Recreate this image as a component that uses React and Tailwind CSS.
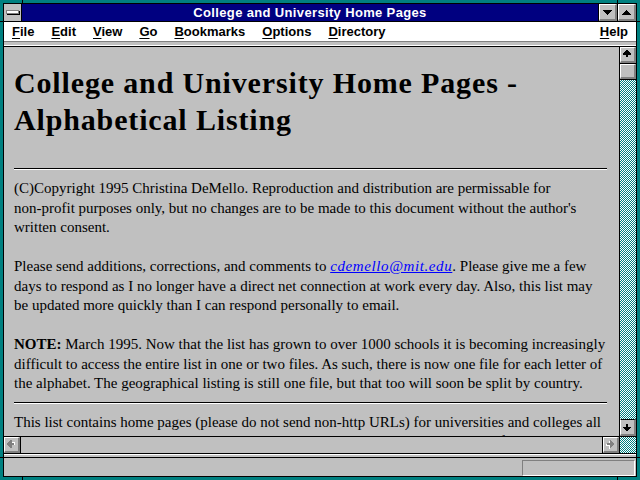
import React from "react";

const bevel =
  "bg-[#c0c0c0] border-t border-l border-white border-r-2 border-b-2 border-r-[#808080] border-b-[#808080] flex items-center justify-center";

const pattern =
  "bg-[image:repeating-conic-gradient(#008080_0%_25%,#ffffff_0%_50%)] bg-[length:2px_2px]";

function ArrowSvg({ dir, disabled }) {
  const rot = { up: 0, down: 180, left: 270, right: 90 }[dir];
  const pts = "4,0 5,0 9,4 9,5 6,5 6,8 3,8 3,5 0,5 0,4";
  return (
    <svg width="9" height="9" viewBox="0 0 10 10" shapeRendering="crispEdges">
      <g transform={`rotate(${rot} 4.5 4.5)`}>
        {disabled && <polygon points={pts} fill="#ffffff" transform="translate(1 1)" />}
        <polygon points={pts} fill={disabled ? "#808080" : "#000000"} />
      </g>
    </svg>
  );
}

function Tri({ up }) {
  return (
    <svg width="9" height="5" viewBox="0 0 9 5" shapeRendering="crispEdges">
      <polygon points={up ? "4.5,0 9,5 0,5" : "0,0 9,0 4.5,5"} fill="#000" />
    </svg>
  );
}

function SysIcon() {
  return (
    <svg width="14" height="5" viewBox="0 0 14 5" shapeRendering="crispEdges">
      <rect x="0" y="0" width="13" height="4" fill="#808080" />
      <rect x="1" y="1" width="11" height="2" fill="#ffffff" />
      <rect x="1" y="4" width="13" height="1" fill="#000" />
      <rect x="13" y="1" width="1" height="4" fill="#000" />
    </svg>
  );
}

function MenuItem({ first, rest }) {
  return (
    <span>
      <span className="underline underline-offset-[2px]">{first}</span>
      {rest}
    </span>
  );
}

export default function App() {
  return (
    <div className="relative w-[640px] h-[480px] bg-[#008080] p-[3px] overflow-hidden">
      {/* frame ticks */}
      <div className="absolute left-[22px] top-0 w-[1px] h-[3px] bg-black" />
      <div className="absolute left-[617px] top-0 w-[1px] h-[3px] bg-black" />
      <div className="absolute left-[22px] bottom-0 w-[1px] h-[3px] bg-black" />
      <div className="absolute left-[617px] bottom-0 w-[1px] h-[3px] bg-black" />
      <div className="absolute left-0 top-[21px] w-[3px] h-[1px] bg-black" />
      <div className="absolute right-0 top-[21px] w-[3px] h-[1px] bg-black" />
      <div className="absolute left-0 top-[457px] w-[3px] h-[1px] bg-black" />
      <div className="absolute right-0 top-[457px] w-[3px] h-[1px] bg-black" />

      <div className="h-full border border-black flex flex-col bg-[#c0c0c0] font-['Liberation_Sans',Arial,sans-serif]">
        {/* title bar */}
        <div className="h-[17px] flex border-b border-black box-content">
          <div className="w-[18px] border-r border-black bg-[#c0c0c0] flex items-center justify-center">
            <SysIcon />
          </div>
          <div className="flex-1 bg-[#000080] text-white font-bold text-[13px] tracking-[0.35px] leading-[17px] text-center">
            College and University Home Pages
          </div>
          <div className="w-[18px] border-l border-black box-content">
            <div className={`${bevel} w-full h-full`}>
              <Tri />
            </div>
          </div>
          <div className="w-[18px] border-l border-black box-content">
            <div className={`${bevel} w-full h-full`}>
              <Tri up />
            </div>
          </div>
        </div>

        {/* menu bar */}
        <div className="h-[19px] bg-white flex items-center pl-[8px] pr-[8px] gap-[17px] text-[13px] font-bold text-black leading-[19px]">
          <MenuItem first="F" rest="ile" />
          <MenuItem first="E" rest="dit" />
          <MenuItem first="V" rest="iew" />
          <MenuItem first="G" rest="o" />
          <MenuItem first="B" rest="ookmarks" />
          <MenuItem first="O" rest="ptions" />
          <MenuItem first="D" rest="irectory" />
          <span className="ml-auto">
            <MenuItem first="H" rest="elp" />
          </span>
        </div>

        {/* toolbar strip (collapsed) */}
        <div className="h-[5px] bg-[#c0c0c0] border-t border-b border-t-[#808080] border-b-white box-border" />
        <div className="h-[1px] bg-black" />

        {/* middle */}
        <div className="h-[406px] flex">
          <div className="flex-1 flex flex-col border-r border-black min-w-0">
            <div className="flex-1 overflow-hidden pl-[10px] pr-[12px] font-['Liberation_Serif','Times_New_Roman',serif] text-black">
              <h1 className="mt-[17px] mb-[30px] text-[30px] tracking-[0.85px] leading-[37px] font-bold whitespace-nowrap">
                College and University Home Pages -
                <br />
                Alphabetical Listing
              </h1>
              <div className="mb-[9px] h-[2px] border-t border-black border-b border-b-white" />
              <div className="text-[15px] leading-[19.5px] whitespace-nowrap">
                <p className="mb-[19.5px]">
                  (C)Copyright 1995 Christina DeMello. Reproduction and distribution are permissable for
                  <br />
                  non-profit purposes only, but no changes are to be made to this document without the author's
                  <br />
                  written consent.
                </p>
                <p className="mb-[19.5px]">
                  Please send additions, corrections, and comments to{" "}
                  <a className="text-[#0000ff] italic underline tracking-[0.6px]">cdemello@mit.edu</a>. Please give me a few
                  <br />
                  days to respond as I no longer have a direct net connection at work every day. Also, this list may
                  <br />
                  be updated more quickly than I can respond personally to email.
                </p>
                <p>
                  <b>NOTE:</b> March 1995. Now that the list has grown to over 1000 schools it is becoming increasingly
                  <br />
                  difficult to access the entire list in one or two files. As such, there is now one file for each letter of
                  <br />
                  the alphabet. The geographical listing is still one file, but that too will soon be split by country.
                </p>
                <div className="mt-[8px] mb-[9px] h-[2px] border-t border-black border-b border-b-white" />
                <p>
                  This list contains home pages (please do not send non-http URLs) for universities and colleges all
                  <br />
                  over the world. To have a school added to this list, please send me email with its full URL.
                </p>
              </div>
            </div>
            {/* horizontal scrollbar */}
            <div className="h-[17px] border-t border-black flex box-border">
              <div className={`${bevel} w-[16px] h-full`}>
                <ArrowSvg dir="left" disabled />
              </div>
              <div className="flex-1 border-l border-r border-black bg-[#c0c0c0]" />
              <div className={`${bevel} w-[16px] h-full`}>
                <ArrowSvg dir="right" disabled />
              </div>
            </div>
          </div>
          {/* vertical scrollbar */}
          <div className="w-[16px] flex flex-col">
            <div className={`${bevel} h-[16px] shrink-0`}>
              <ArrowSvg dir="up" />
            </div>
            <div className="h-[17px] border-t border-b border-black shrink-0 box-border">
              <div className={`${bevel} h-full`} />
            </div>
            <div className={`flex-1 ${pattern}`} />
            <div className={`${bevel} h-[17px] border-t-black shrink-0`}>
              <ArrowSvg dir="down" />
            </div>
            <div className={`h-[17px] border-t border-black shrink-0 box-border ${pattern}`} />
          </div>
        </div>

        {/* separator */}
        <div className="h-[1px] bg-black" />
        <div className="h-[3px] bg-[#c0c0c0] border-t border-white box-border" />
        <div className="h-[1px] bg-black" />

        {/* status bar */}
        <div className="h-[18px] flex justify-end items-end pr-[1px] bg-[#c0c0c0]">
          <div className="w-[113px] h-[16px] border-t border-l border-[#808080] border-r border-b border-r-white border-b-white" />
        </div>
      </div>
    </div>
  );
}
